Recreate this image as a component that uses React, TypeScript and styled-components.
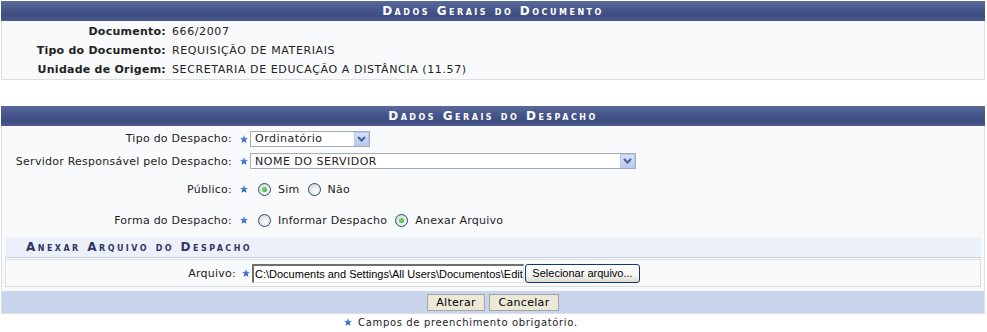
import React from 'react'
import styled, { createGlobalStyle } from 'styled-components'

const GlobalStyle = createGlobalStyle`
  html, body {
    margin: 0;
    padding: 0;
    background: #ffffff;
  }
  body {
    font-family: "DejaVu Sans", Verdana, sans-serif;
    font-size: 11px;
    letter-spacing: 0.25px;
    color: #222222;
  }
`

const Page = styled.div`
  padding: 1px 2px 0 1px;
  width: 984px;
`

const Panel = styled.div<{ marginTop?: number }>`
  margin-top: ${(props) => props.marginTop || 0}px;
  border: 1px solid #dedfe3;
  border-top: none;
  background: #f9fafc;
`

const Caption = styled.div`
  height: 20px;
  margin: 0 -1px;
  display: flex;
  align-items: center;
  justify-content: center;
  background: linear-gradient(#5a6a9c 0%, #45558a 45%, #3e4d80 75%, #4a5a8f 100%);
  color: #ffffff;
  font-weight: bold;
  font-variant: small-caps;
  font-size: 12px;
  letter-spacing: 2.5px;
`

const InfoBody = styled.div`
  padding: 1px 0 0;
`

const InfoRow = styled.div`
  display: grid;
  grid-template-columns: 164px 1fr;
  column-gap: 6px;
  height: 19px;
  align-items: center;
`

const InfoLabel = styled.div`
  text-align: right;
  font-weight: bold;
`

const InfoValue = styled.div`
  letter-spacing: 0.6px;
`

const FormBody = styled.div`
  padding: 0 3px 0;
`

const FormRow = styled.div<{ h: number }>`
  display: flex;
  align-items: center;
  height: ${(props) => props.h}px;
  margin: 0 -3px;
`

const FormLabel = styled.div<{ w?: number }>`
  width: ${(props) => props.w || 230}px;
  text-align: right;
  flex: none;
`

const Required = styled.span<{ gap?: number }>`
  display: inline-flex;
  margin: 0 2px 0 ${(props) => props.gap ?? 8}px;
  width: 8px;
  height: 8px;
`

const SelectBox = styled.div<{ w: number }>`
  width: ${(props) => props.w}px;
  height: 16px;
  border: 1px solid #a5acb5;
  background: #ffffff;
  display: flex;
  align-items: center;
  box-sizing: border-box;
  padding-left: 4px;
`

const SelectText = styled.span`
  flex: 1;
  letter-spacing: 0.5px;
`

const SelectArrow = styled.span`
  width: 15px;
  height: 14px;
  background: linear-gradient(#d3e0fb, #b6c9f5);
  border: 1px solid #b9c9ee;
  box-sizing: border-box;
  display: flex;
  align-items: center;
  justify-content: center;
`

const RadioGroup = styled.div`
  display: flex;
  align-items: center;
`

const RadioItem = styled.label`
  display: inline-flex;
  align-items: center;
  margin-left: 8px;
`

const RadioCircle = styled.span<{ checked?: boolean }>`
  width: 13px;
  height: 13px;
  border-radius: 50%;
  border: 1px solid #1c5180;
  box-sizing: border-box;
  background: radial-gradient(circle at 60% 65%, #ffffff 0%, #e6e6e0 55%, #c9c9c2 100%);
  display: inline-flex;
  align-items: center;
  justify-content: center;
  margin-right: 7px;

  &::after {
    content: '';
    display: ${(props) => (props.checked ? 'block' : 'none')};
    width: 5px;
    height: 5px;
    border-radius: 50%;
    background: radial-gradient(circle at 40% 40%, #7ee07e, #21a121);
  }
`

const SubCaption = styled.div`
  margin-top: 4px;
  height: 20px;
  background: #ecf0f8;
  border-bottom: 1px solid #c8d0df;
  display: flex;
  align-items: center;
  padding-left: 21px;
  color: #2f3568;
  font-weight: bold;
  font-variant: small-caps;
  font-size: 12px;
  letter-spacing: 2.45px;
`

const FileBox = styled.div`
  margin-top: 1px;
  height: 28px;
  box-sizing: border-box;
  border: 1px solid #dcdde1;
  display: flex;
  align-items: center;
`

const FileInput = styled.div`
  width: 272px;
  height: 19px;
  box-sizing: border-box;
  border-top: 2px solid #6f6f6f;
  border-left: 2px solid #6f6f6f;
  border-right: 1px solid #e4e2da;
  border-bottom: 1px solid #e4e2da;
  background: #ffffff;
  font-family: "Liberation Sans", Arial, sans-serif;
  font-size: 11px;
  letter-spacing: 0;
  white-space: nowrap;
  overflow: hidden;
  line-height: 16px;
  padding-left: 1px;
  color: #000000;
`

const BrowseButton = styled.button`
  margin-left: 1px;
  height: 19px;
  width: 115px;
  border: 1px solid #0c3a76;
  border-radius: 3px;
  background: linear-gradient(#ffffff 0%, #f4f4f0 60%, #dcdad0 100%);
  font-family: "Liberation Sans", Arial, sans-serif;
  font-size: 11px;
  padding: 0;
  color: #000000;
`

const Footer = styled.div`
  margin: 4px -3px 0;
  height: 22px;
  background: #c8d5ec;
  display: flex;
  align-items: center;
  justify-content: center;
  gap: 4px;
`

const ActionButton = styled.button<{ w: number }>`
  width: ${(props) => props.w}px;
  height: 17px;
  border: 1px solid #a3a3a3;
  background: #ece9d8;
  font-family: "DejaVu Sans", Verdana, sans-serif;
  font-size: 11px;
  letter-spacing: 0.3px;
  padding: 0;
  color: #000000;
`

const Note = styled.div`
  display: flex;
  align-items: center;
  justify-content: center;
  height: 16px;
  padding-right: 64px;
  font-size: 10px;
  letter-spacing: 0.65px;
`

const Star = () => (
  <svg width="8" height="8" viewBox="0 0 10 10">
    <defs>
      <linearGradient id="sg" x1="0" y1="0" x2="0" y2="1">
        <stop offset="0" stopColor="#7ba3ec" />
        <stop offset="1" stopColor="#1f4fb0" />
      </linearGradient>
    </defs>
    <polygon
      points="5,0 6.3,3.3 10,3.6 7.1,6 8.1,9.8 5,7.7 1.9,9.8 2.9,6 0,3.6 3.7,3.3"
      fill="url(#sg)"
    />
  </svg>
)

const Chevron = () => (
  <svg width="9" height="6" viewBox="0 0 9 6">
    <polyline points="1,1 4.5,4.5 8,1" fill="none" stroke="#4d5f86" strokeWidth="2" />
  </svg>
)

const Select = ({ w, value }: { w: number; value: string }) => (
  <SelectBox w={w}>
    <SelectText>{value}</SelectText>
    <SelectArrow>
      <Chevron />
    </SelectArrow>
  </SelectBox>
)

const Radio = ({ checked, label }: { checked?: boolean; label: string }) => (
  <RadioItem>
    <RadioCircle checked={checked} />
    {label}
  </RadioItem>
)

const documento = [
  { label: 'Documento:', value: '666/2007' },
  { label: 'Tipo do Documento:', value: 'REQUISIÇÃO DE MATERIAIS' },
  { label: 'Unidade de Origem:', value: 'SECRETARIA DE EDUCAÇÃO A DISTÂNCIA (11.57)' },
]

const App = () => {
  return (
    <>
      <GlobalStyle />
      <Page>
        <Panel>
          <Caption>Dados Gerais do Documento</Caption>
          <InfoBody>
            {documento.map((row) => (
              <InfoRow key={row.label}>
                <InfoLabel>{row.label}</InfoLabel>
                <InfoValue>{row.value}</InfoValue>
              </InfoRow>
            ))}
          </InfoBody>
        </Panel>

        <Panel marginTop={26}>
          <Caption>Dados Gerais do Despacho</Caption>
          <FormBody>
            <FormRow h={25}>
              <FormLabel>Tipo do Despacho:</FormLabel>
              <Required><Star /></Required>
              <Select w={120} value="Ordinatório" />
            </FormRow>
            <FormRow h={20}>
              <FormLabel>Servidor Responsável pelo Despacho:</FormLabel>
              <Required><Star /></Required>
              <Select w={386} value="NOME DO SERVIDOR" />
            </FormRow>
            <FormRow h={36}>
              <FormLabel>Público:</FormLabel>
              <Required><Star /></Required>
              <RadioGroup>
                <Radio checked label="Sim" />
                <Radio label="Não" />
              </RadioGroup>
            </FormRow>
            <FormRow h={26}>
              <FormLabel>Forma do Despacho:</FormLabel>
              <Required><Star /></Required>
              <RadioGroup>
                <Radio label="Informar Despacho" />
                <Radio checked label="Anexar Arquivo" />
              </RadioGroup>
            </FormRow>

            <SubCaption>Anexar Arquivo do Despacho</SubCaption>
            <FileBox>
              <FormLabel>Arquivo:</FormLabel>
              <Required gap={6}><Star /></Required>
              <FileInput>C:\Documents and Settings\All Users\Documentos\Edit</FileInput>
              <BrowseButton>Selecionar arquivo...</BrowseButton>
            </FileBox>

            <Footer>
              <ActionButton w={58}>Alterar</ActionButton>
              <ActionButton w={70}>Cancelar</ActionButton>
            </Footer>
          </FormBody>
        </Panel>
        <Note>
          <Required gap={0}><Star /></Required>
          &nbsp;Campos de preenchimento obrigatório.
        </Note>
      </Page>
    </>
  )
}

export default App
